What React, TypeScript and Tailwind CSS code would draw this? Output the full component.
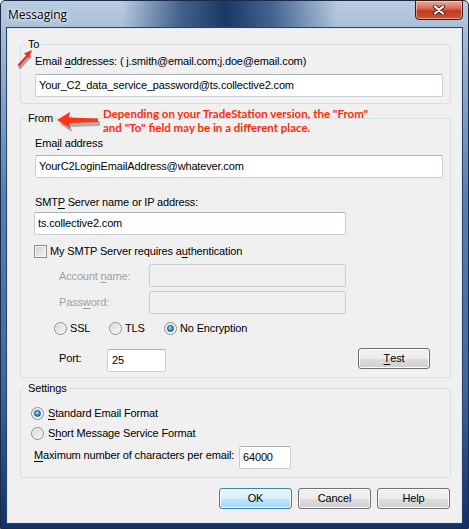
import type { ReactNode } from "react";

function U({ children }: { children: ReactNode }) {
  return <span className="underline decoration-1 underline-offset-[2px]">{children}</span>;
}

function TextBox({ value = "", disabled = false, className = "" }: { value?: string; disabled?: boolean; className?: string }) {
  return (
    <div
      className={`flex h-[23px] items-center rounded-[2px] border pl-[3px] leading-[13px] ${
        disabled ? "border-[#c9ced4] bg-[#f0f0f0]" : "border-[#c8ced6] border-t-[#abb1ba] bg-white"
      } ${className}`}
    >
      {value}
    </div>
  );
}

function Radio({ checked = false }: { checked?: boolean }) {
  return (
    <span className="flex h-[13px] w-[13px] shrink-0 items-center justify-center rounded-full border border-[#8e8f8f] bg-[linear-gradient(135deg,#d2d4d6,#fbfbfb)] shadow-[inset_0_0_0_1px_#f3f3f3]">
      {checked && (
        <span className="h-[7px] w-[7px] rounded-full border border-[#1a4f82] bg-[radial-gradient(circle_at_40%_35%,#c2ecff_0%,#3f9de0_45%,#114c86_100%)]" />
      )}
    </span>
  );
}

function Button({ children, primary = false, className = "w-[73px]" }: { children: ReactNode; primary?: boolean; className?: string }) {
  return (
    <div
      className={`flex h-[21px] items-center justify-center rounded-[3px] border shadow-[inset_0_0_0_1px_#fbfbfb] ${
        primary
          ? "border-[#3c7fb1] bg-[linear-gradient(to_bottom,#eaf6fd_0%,#d9f0fc_50%,#bee6fd_51%,#a7d9f5_100%)]"
          : "border-[#707070] bg-[linear-gradient(to_bottom,#f2f2f2_0%,#ebebeb_50%,#dddddd_51%,#cfcfcf_100%)]"
      } ${className}`}
    >
      {children}
    </div>
  );
}

function Group({ title, className = "", children }: { title: string; className?: string; children: ReactNode }) {
  return (
    <fieldset className={`rounded-[3px] border border-[#d5dfe5] ${className}`}>
      <legend className="ml-[5px] px-[2px] leading-[14px]">{title}</legend>
      {children}
    </fieldset>
  );
}

export default function App() {
  return (
    <div className="relative h-[529px] w-[469px] overflow-hidden bg-white font-['Liberation_Sans',Arial,sans-serif] text-[11px] tracking-[-0.15px] text-black">
      {/* window frame */}
      <div className="flex h-full flex-col rounded-t-[5px] border border-[#1c2c48] bg-[linear-gradient(to_bottom,#b9cce0_0px,#97b1cf_60px,#5681b6_190px,#3c69a6_380px,#12306a_100%)]">
        {/* title bar */}
        <div className="flex h-[27px] shrink-0 items-start bg-[linear-gradient(to_right,transparent_26%,rgba(24,58,108,0.7)_38%,rgba(14,44,92,0.92)_48%,rgba(30,66,118,0.75)_58%,transparent_72%)]">
          <span className="pl-[7px] pt-[7px] font-['Open_Sans',sans-serif] text-[12px] leading-[14px] tracking-normal text-black [text-shadow:0_0_6px_#ffffff,0_0_3px_#ffffff]">
            Messaging
          </span>
          <div className="-mt-px ml-auto mr-[5px] flex h-[20px] w-[48px] items-center justify-center rounded-b-[4px] border border-[#3a1b14] bg-[linear-gradient(to_bottom,#e9ab9c_0%,#d96e58_40%,#c43a1e_55%,#cf5434_100%)] shadow-[inset_0_0_0_1px_rgba(255,220,210,0.55)]">
            <svg width="12" height="10" viewBox="0 0 12 10">
              <path d="M2 1.5 L10 8.5 M10 1.5 L2 8.5" stroke="#4a2018" strokeWidth="4" strokeLinecap="round" />
              <path d="M2 1.5 L10 8.5 M10 1.5 L2 8.5" stroke="#ffffff" strokeWidth="2.2" strokeLinecap="round" />
            </svg>
          </div>
        </div>

        {/* client area */}
        <div className="mx-[6px] mb-[5px] flex flex-1 flex-col border border-[#dfe6ee] bg-[#f0f0f0] pl-[12px] pr-[10px] pt-[8px] shadow-[0_0_0_1px_#2a4366]">
          <Group title="To">
            <div className="flex flex-col pb-[6px] pl-[14px] pr-[7px] pt-[4px]">
              <div className="leading-[13px]">
                Email <U>a</U>ddresses: ( j.smith@email.com;j.doe@email.com)
              </div>
              <TextBox className="mt-[6px]" value="Your_C2_data_service_password@ts.collective2.com" />
            </div>
          </Group>

          <Group title="From" className="mt-[7px]">
            <div className="flex flex-col pb-[5px] pl-[14px] pr-[7px] pt-[12px]">
              <div className="leading-[13px]">
                Ema<U>i</U>l address
              </div>
              <TextBox className="mt-[5px]" value="YourC2LoginEmailAddress@whatever.com" />
              <div className="mt-[18px] leading-[13px]">
                SMT<U>P</U> Server name or IP address:
              </div>
              <TextBox className="-ml-px mt-[3px] w-[312px]" value="ts.collective2.com" />

              <div className="-ml-px mt-[10px] flex h-[13px] items-center gap-[3px] leading-[13px]">
                <span className="h-[13px] w-[13px] shrink-0 border border-[#8e8f8f] bg-[linear-gradient(135deg,#c9cdd3,#f7f7f7)] shadow-[inset_0_0_0_1px_#f4f4f4]" />
                <span>
                  My SMTP Server requires a<U>u</U>thentication
                </span>
              </div>

              <div className="ml-[24px] mt-[6px] flex items-start">
                <span className="mt-[6px] w-[90px] leading-[13px] text-[#a0a0a0]">
                  Account <U>n</U>ame:
                </span>
                <TextBox disabled className="w-[197px]" />
              </div>
              <div className="ml-[24px] mt-[4px] flex items-start">
                <span className="mt-[5px] w-[90px] leading-[13px] text-[#a0a0a0]">
                  Pass<U>w</U>ord:
                </span>
                <TextBox disabled className="w-[197px]" />
              </div>

              <div className="ml-[19px] mt-[8px] flex h-[13px] items-center leading-[13px]">
                <span className="flex w-[55px] items-center gap-[3px]">
                  <Radio />
                  SSL
                </span>
                <span className="flex w-[55px] items-center gap-[3px]">
                  <Radio />
                  TLS
                </span>
                <span className="flex items-center gap-[3px]">
                  <Radio checked />
                  No Encryption
                </span>
              </div>

              <div className="mt-[13px] flex items-start">
                <span className="ml-[24px] mt-[4px] w-[48px] leading-[13px]">Port:</span>
                <TextBox className="mt-px w-[59px] pl-[4px]" value="25" />
                <Button className="ml-auto mr-[13px] w-[72px]">
                  <U>T</U>est
                </Button>
              </div>
            </div>
          </Group>

          <Group title="Settings" className="mt-[3px]">
            <div className="flex flex-col pb-[8px] pl-[10px] pr-[7px] pt-[12px]">
              <div className="flex h-[13px] items-center gap-[4px] leading-[13px]">
                <Radio checked />
                <span>
                  <U>S</U>tandard Email Format
                </span>
              </div>
              <div className="mt-[7px] flex h-[13px] items-center gap-[4px] leading-[13px]">
                <Radio />
                <span>
                  S<U>h</U>ort Message Service Format
                </span>
              </div>
              <div className="ml-[3px] mt-[6px] flex items-start">
                <span className="mt-[3px] w-[205px] whitespace-nowrap leading-[13px]">
                  <U>M</U>aximum number of characters per email:
                </span>
                <TextBox className="w-[52px]" value="64000" />
              </div>
            </div>
          </Group>

          <div className="mr-px mt-[10px] flex justify-end gap-[6px]">
            <Button primary>OK</Button>
            <Button>Cancel</Button>
            <Button>Help</Button>
          </div>
        </div>
      </div>

      {/* red annotation arrows and note laid over the dialog */}
      <svg className="absolute left-[14px] top-[46px]" width="24" height="24" viewBox="0 0 24 24">
        <path d="M5 20 L15 9" stroke="rgba(60,20,10,0.35)" strokeWidth="3" strokeLinecap="round" transform="translate(1 1.5)" />
        <path d="M5 19 L14 9" stroke="#e8321b" strokeWidth="2.4" strokeLinecap="round" />
        <path d="M18 4 L10 7.5 L15 12 Z" fill="#e8321b" />
      </svg>
      <svg className="absolute left-[54px] top-[110px]" width="48" height="22" viewBox="0 0 48 22">
        <path d="M5 12 L17 4 L16 9 L45 9 L45 14 L16 15 L17 20 Z" fill="rgba(70,40,30,0.35)" transform="translate(1 2)" />
        <path d="M3 10 L16 2 L15 7.5 L44 8.5 L44 12 L15 13 L16 18 Z" fill="#ff3516" />
      </svg>
      <div className="absolute left-[103px] top-[107px] font-['Lato',sans-serif] text-[11.5px] font-bold leading-[13.5px] tracking-normal text-[#ff2a0a]">
        <div>Depending on your TradeStation version, the "From"</div>
        <div>and "To" field may be in a different place.</div>
      </div>
    </div>
  );
}
